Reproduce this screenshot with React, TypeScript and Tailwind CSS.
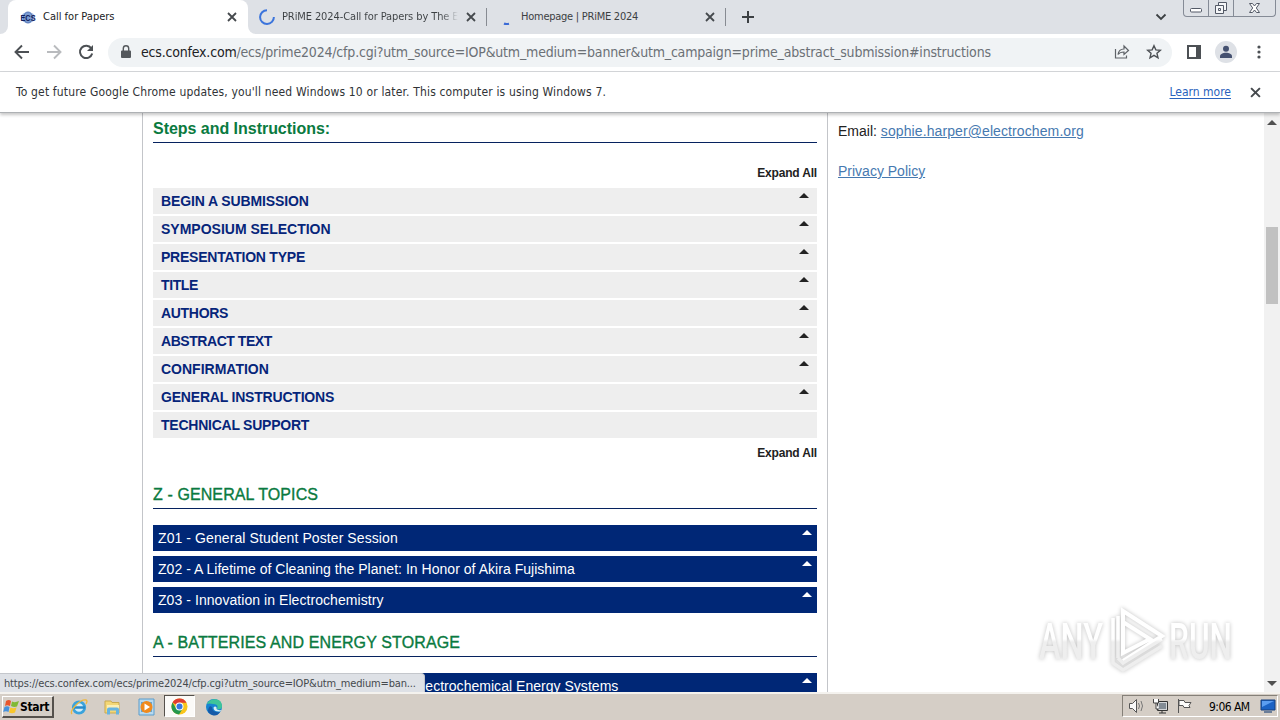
import type { ReactNode } from "react";

const ui = "font-['DejaVu_Sans_Condensed','DejaVu_Sans',sans-serif]";

function CloseIcon({ size = 10, color = "#45494d" }: { size?: number; color?: string }) {
  return (
    <svg width={size} height={size} viewBox="0 0 10 10" className="shrink-0">
      <path d="M1 1l8 8M9 1L1 9" stroke={color} strokeWidth="1.8" fill="none" />
    </svg>
  );
}

function TabStrip() {
  return (
    <div className={`flex h-[34px] shrink-0 bg-[#dee1e6] text-[11px] text-[#3c4043] ${ui}`}>
      <div className="flex w-2 bg-white">
        <div className="w-full rounded-br-lg bg-[#dee1e6]" />
      </div>
      <div className="flex w-[240px] items-center rounded-t-lg bg-white pl-3 pr-[11px]">
        <svg width="16" height="16" viewBox="0 0 16 16" className="shrink-0">
          <ellipse cx="8" cy="8.500" rx="7" ry="5.500" fill="#a9c3e8" />
          <ellipse cx="8" cy="8.500" rx="4.500" ry="5.500" fill="#7c9bd0" stroke="#5273b5" />
          <text x="0.500" y="11.700" fontSize="9" fontWeight="bold" fontFamily="Liberation Sans" textLength="15" lengthAdjust="spacingAndGlyphs" fill="#10205c">ECS</text>
        </svg>
        <span className="ml-[7px] whitespace-nowrap text-[#202124]">Call for Papers</span>
        <span className="ml-auto flex"><CloseIcon /></span>
      </div>
      <div className="flex w-[239px] bg-white">
        <div className="flex w-full items-center rounded-bl-lg bg-[#dee1e6] pl-[11px] pr-[11px]">
          <svg width="16" height="16" viewBox="0 0 16 16" className="shrink-0">
            <path d="M8 1.200A6.900 6.900 0 1 0 14.900 8" stroke="#3b74dc" strokeWidth="2" fill="none" />
          </svg>
          <span className="ml-[7px] w-[176px] overflow-hidden whitespace-nowrap bg-gradient-to-r from-[#3c4043] from-90% to-[#dee1e6] bg-clip-text tracking-[-0.1px] text-transparent">PRiME 2024-Call for Papers by The Electro</span>
          <span className="ml-auto flex"><CloseIcon /></span>
        </div>
      </div>
      <div className="my-2 -ml-px mr-px w-px bg-[#878b92]" />
      <div className="flex w-[237px] items-center pl-[11px] pr-[10px]">
        <svg width="16" height="16" viewBox="0 0 16 16" className="shrink-0">
          <path d="M5 14.500q2 1 5 0.200" stroke="#3b6bd6" strokeWidth="2" fill="none" />
        </svg>
        <span className="ml-[6px] whitespace-nowrap tracking-[-0.25px]">Homepage | PRiME 2024</span>
        <span className="ml-auto flex"><CloseIcon /></span>
      </div>
      <div className="my-2 w-px bg-[#878b92]" />
      <svg width="14" height="14" viewBox="0 0 14 14" className="ml-[15px] mt-[10px]">
        <path d="M7 1v12M1 7h12" stroke="#3c4043" strokeWidth="2" />
      </svg>
      <svg width="12" height="8" viewBox="0 0 12 8" className="ml-auto mr-[16px] mt-[13px]">
        <path d="M1.500 1.500L6 6l4.500-4.500" stroke="#3c4043" strokeWidth="1.800" fill="none" />
      </svg>
      <div className="mr-[4px] flex h-[17px] w-[93px] rounded-b border border-t-0 border-[#858b96]">
        <div className="w-[25px] border-r border-[#858b96]">
          <svg width="24" height="16"><rect x="6.500" y="8.500" width="11" height="3.500" rx="1" fill="#fff" stroke="#535966" /></svg>
        </div>
        <div className="w-[25px] border-r border-[#858b96]">
          <svg width="24" height="16"><g fill="#f5f6f8" stroke="#535966"><path d="M9.500 2.500h8v8h-8z" /><path d="M6.500 5.500h8v8h-8z" /><path d="M9.500 8.500h2v2h-2z" /></g></svg>
        </div>
        <svg width="41" height="16"><path d="M15.500 3.500h3l2 2.500 2-2.500h3l-3.200 4.500 3.200 4.500h-3l-2-2.500-2 2.500h-3L18.700 8z" fill="#fff" stroke="#535966" /></svg>
      </div>
    </div>
  );
}

function Toolbar() {
  return (
    <div className={`flex h-[38px] shrink-0 items-center border-b border-[#d5d7da] bg-white pb-px ${ui}`}>
      <svg width="16" height="16" viewBox="0 0 16 16" className="ml-[14px]"><path d="M15 8H2M8 1.500L1.500 8 8 14.500" stroke="#4c5054" strokeWidth="1.900" fill="none" /></svg>
      <svg width="16" height="16" viewBox="0 0 16 16" className="ml-[16px]"><path d="M1 8h13M8 1.500L14.500 8 8 14.500" stroke="#b9bbbe" strokeWidth="1.900" fill="none" /></svg>
      <svg width="16" height="16" viewBox="0 0 16 16" className="ml-[16px]"><path d="M13.300 4.300A6.200 6.200 0 1 0 14.200 9.500" stroke="#4c5054" strokeWidth="2" fill="none" /><path d="M15 1v6H9z" fill="#4c5054" /></svg>
      <div className="ml-[14px] flex h-[29px] w-[1064px] items-center rounded-full bg-[#f0f3f5] pl-[13px]">
        <svg width="10" height="14" viewBox="0 0 10 14"><path d="M1 5.500h8a1 1 0 0 1 1 1V12a1 1 0 0 1-1 1H1a1 1 0 0 1-1-1V6.500a1 1 0 0 1 1-1z" fill="#54585c" /><path d="M2.300 6V3.500a2.700 2.700 0 0 1 5.400 0V6" stroke="#54585c" strokeWidth="1.400" fill="none" /></svg>
        <span className="ml-[10px] mt-px whitespace-nowrap text-[14px] tracking-[-0.19px] text-[#6b7075]"><span className="text-[#202124]">ecs.confex.com</span>/ecs/prime2024/cfp.cgi?utm_source=IOP&amp;utm_medium=banner&amp;utm_campaign=prime_abstract_submission#instructions</span>
        <svg width="16" height="16" viewBox="0 0 16 16" className="ml-auto"><path d="M1.500 5v9h11V11.500M4 10.500C4.500 7 7 5 10 5V2l4.500 4.500L10 10.500V8C7.500 8 5.500 8.500 4 10.500z" stroke="#5f6368" strokeWidth="1.200" fill="none" /></svg>
        <svg width="16" height="16" viewBox="0 0 16 16" className="ml-[16px] mr-[10px]"><path d="M8 1.700l1.850 4.200 4.550.4-3.450 3 1.050 4.500L8 11.400l-4 2.400 1.050-4.500-3.450-3 4.550-.4z" stroke="#4c5054" strokeWidth="1.400" fill="none" /></svg>
      </div>
      <svg width="14" height="14" viewBox="0 0 14 14" className="ml-[15px]"><path d="M1 1h12v12H1z" stroke="#4c5054" strokeWidth="2" fill="none" /><path d="M9 0h5v14H9z" fill="#4c5054" /></svg>
      <svg width="22" height="22" viewBox="0 0 22 22" className="ml-[14px]"><circle cx="11" cy="11" r="11" fill="#dee1e6" /><circle cx="11" cy="7.800" r="3" fill="#455170" /><path d="M5 17v-1.500c0-5 12-5 12 0V17z" fill="#455170" /></svg>
      <svg width="4" height="14" viewBox="0 0 4 14" className="ml-[20px]"><g fill="#4c5054"><circle cx="2" cy="2" r="1.600" /><circle cx="2" cy="7" r="1.600" /><circle cx="2" cy="12" r="1.600" /></g></svg>
    </div>
  );
}

function Notice() {
  return (
    <div className={`relative z-10 flex h-[41px] shrink-0 items-center border-b border-[#aeb1b4] bg-white pl-4 pr-[19px] text-[12px] shadow-[0_2px_3px_rgba(0,0,0,0.22)] ${ui}`}>
      <span className="whitespace-nowrap tracking-[0.16px] text-[#303336]">To get future Google Chrome updates, you'll need Windows 10 or later. This computer is using Windows 7.</span>
      <span className="ml-auto mr-[19px] whitespace-nowrap text-[#2a62bd] underline underline-offset-2">Learn more</span>
      <CloseIcon size={11} />
    </div>
  );
}

function Caret({ color = "#222" }: { color?: string }) {
  return <svg width="10" height="5" viewBox="0 0 10 5" className="shrink-0"><path d="M0 5L5 0l5 5z" fill={color} /></svg>;
}

function Heading({ children, track }: { children: ReactNode; track: string }) {
  return <h2 className={`mb-4 h-[24px] whitespace-nowrap border-b border-[#06225f] text-[16px] leading-[20px] text-[#0a7a40] [-webkit-text-stroke:0.35px_#0a7a40] ${track}`}>{children}</h2>;
}

const steps = [
  { label: "BEGIN A SUBMISSION", track: "tracking-[-0.12px]" },
  { label: "SYMPOSIUM SELECTION", track: "tracking-[0px]" },
  { label: "PRESENTATION TYPE", track: "tracking-[-0.24px]" },
  { label: "TITLE", track: "tracking-[-0.4px]" },
  { label: "AUTHORS", track: "tracking-[-0.3px]" },
  { label: "ABSTRACT TEXT", track: "tracking-[-0.45px]" },
  { label: "CONFIRMATION", track: "tracking-[0px]" },
  { label: "GENERAL INSTRUCTIONS", track: "tracking-[-0.2px]" },
  { label: "TECHNICAL SUPPORT", track: "tracking-[-0.24px]" },
];

function Topic({ children, track }: { children: ReactNode; track: string }) {
  return (
    <div className={`mb-[5px] flex h-[26px] justify-between whitespace-nowrap bg-[#002776] pl-[5px] pr-[5px] text-[14px] leading-[26px] text-white ${track}`}>
      <span>{children}</span>
      <span className="mt-[5px] flex"><Caret color="#fff" /></span>
    </div>
  );
}

function Page() {
  return (
    <div className="flex min-h-0 flex-1 overflow-hidden bg-white font-['Liberation_Sans',Arial,sans-serif]">
      <main className="ml-[142px] w-[686px] shrink-0 border-x border-[#c3c5c9] pl-[10px] pr-[10px] pt-[6px]">
        <div className="h-[24px] border-b border-[#06225f] text-[16px] font-bold leading-[20px] tracking-[-0.03px] text-[#0a7a40]">Steps and Instructions:</div>
        <div className="mt-[22px] h-[23px] text-right text-[12px] font-bold leading-[16px] tracking-[-0.18px] text-[#222]">Expand All</div>
        {steps.map((s, i) => (
          <div key={s.label} className={`mb-[2px] flex h-[26px] justify-between bg-[#eee] pl-2 pr-2 text-[14px] font-bold leading-[26px] text-[#06257a] ${s.track}`}>
            <span>{s.label}</span>
            {i < 8 && <span className="mt-[5px] flex"><Caret /></span>}
          </div>
        ))}
        <div className="mt-[7px] h-[40px] text-right text-[12px] font-bold leading-[16px] tracking-[-0.18px] text-[#222]">Expand All</div>
        <Heading track="tracking-[0.1px]">Z - GENERAL TOPICS</Heading>
        <Topic track="tracking-[0.09px]">Z01 - General Student Poster Session</Topic>
        <Topic track="tracking-[0.03px]">Z02 - A Lifetime of Cleaning the Planet: In Honor of Akira Fujishima</Topic>
        <Topic track="tracking-[0.06px]">Z03 - Innovation in Electrochemistry</Topic>
        <div className="mt-[20px]"><Heading track="tracking-[0.12px]">A - BATTERIES AND ENERGY STORAGE</Heading></div>
        <Topic track="tracking-[0.03px]">A01 - New Approaches and Advances in Electrochemical Energy Systems</Topic>
      </main>
      <aside className="whitespace-nowrap pl-[10px] pt-[8px] text-[14px] leading-5 text-[#222]">
        <p>Email: <a className="tracking-[0.1px] text-[#4679b0] underline">sophie.harper@electrochem.org</a></p>
        <p className="mt-5"><a className="text-[#4679b0] underline">Privacy Policy</a></p>
      </aside>
      <div className="ml-auto flex w-4 flex-col items-center bg-[#f1f1f1] pb-[6px] pt-[7px]">
        <Caret color="#505050" />
        <div className="mt-[102px] h-[77px] w-3 bg-[#c1c1c1]" />
        <span className="mt-auto flex rotate-180"><Caret color="#505050" /></span>
      </div>
    </div>
  );
}

function Taskbar() {
  return (
    <div className={`flex h-[28px] shrink-0 items-start border-t-2 border-[#f4f2ee] bg-[#d5cec6] pt-px text-[12px] text-black ${ui}`}>
      <div className="ml-[2px] mt-[1px] flex h-[22px] w-[52px] items-center border border-b-2 border-r-2 border-b-[#55514c] border-l-white border-r-[#55514c] border-t-white">
        <svg width="17" height="16" viewBox="0 0 17 16" className="shrink-0"><path d="M3 2q3-2 5 0L7 7Q4 5.500 2 7z" fill="#e8562d" /><path d="M9 2.500q3 1.500 7-.5l-2 5.500q-3 1-6-.5z" fill="#80b935" /><path d="M1.500 8q2.500-1.500 5 0L5.500 13Q3 11.500.2 13z" fill="#4692dd" /><path d="M7.500 8.500q2.500 1.500 6 0L12 13.500q-3 1.500-6 0z" fill="#f8c62c" /></svg>
        <b className="text-[12px] tracking-[-0.35px]">Start</b>
      </div>
      <svg width="18" height="18" viewBox="0 0 18 18" className="ml-[16px] mt-[3px]"><circle cx="9" cy="9.500" r="5.700" fill="#d5edf8" stroke="#3aa3dc" strokeWidth="2.800" /><path d="M4 9.500h11" stroke="#278aca" strokeWidth="2.500" /><path d="M2 16C-1 13 10 1 16 2q2 .5 0 4" stroke="#efb83d" strokeWidth="1.300" fill="none" /></svg>
      <svg width="17" height="18" viewBox="0 0 17 18" className="ml-[16px] mt-[3px]"><path d="M1 3h6l1 1.500h7V15H1z" fill="#f3d776" stroke="#c9a950" /><path d="M3 7h12v5H3z" fill="#fcefb4" /><path d="M3 16.500v-5q0-2 2-2h8q2 0 2 2v5h-3v-4H6v4z" fill="#67b4e0" /></svg>
      <svg width="17" height="18" viewBox="0 0 17 18" className="ml-[17px] mt-[3px]"><path d="M1 1h15v16H1z" fill="#b7d9ef" stroke="#5b9dcc" /><path d="M3 4h11v10H3z" fill="#5fa7d8" /><circle cx="8.500" cy="9" r="6" fill="#f08a1d" /><path d="M6.500 5.500L12 9l-5.500 3.500z" fill="#fff" /></svg>
      <div className="ml-[9px] flex h-[22px] w-[31px] items-center justify-center border border-b-white border-l-[#55514c] border-r-white border-t-[#55514c] bg-[#fbfaf8]">
        <svg width="17" height="17" viewBox="0 0 18 18"><circle cx="9" cy="9" r="8.500" fill="#f9c51b" /><path d="M9 9L1.600 4.700A8.500 8.500 0 0 1 16.400 5H9z" fill="#df3d31" /><path d="M1.600 4.700A8.500 8.500 0 0 0 8.500 17.500L12.500 11 9 9 5.500 11z" fill="#25984e" /><circle cx="9" cy="9" r="4.200" fill="#fff" /><circle cx="9" cy="9" r="3.200" fill="#3877df" /></svg>
      </div>
      <svg width="18" height="18" viewBox="0 0 18 18" className="ml-[10px] mt-[3px]"><circle cx="9" cy="9" r="8" fill="#1684d2" /><path d="M2 6C4 0 17-1 17 8q0 4-5 3 2-5-4-5Q4 5 2 6z" fill="#3ec49a" /><path d="M7 9q0 6 8 5-3 5-8 3-7-3-2-9z" fill="#155aa8" /><path d="M10 8.500q2 0 1.500 2.500 1 1.500 5 1l-1.500 1.500Q9 14 8.500 10q0-1.500 1.500-1.500z" fill="#d8eef5" /></svg>
      <div className="ml-auto mr-[2px] flex h-[22px] w-[156px] items-center border border-b-white border-l-[#858078] border-r-white border-t-[#858078] pl-[5px]">
        <svg width="18" height="16" viewBox="0 0 18 16"><path d="M1.500 5.500h3l4-4v13l-4-4h-3z" fill="#f9f9f9" stroke="#555" /><path d="M10.500 5q2 3 0 6M13 3q3 5 0 10" stroke="#777" fill="none" /></svg>
        <svg width="17" height="16" viewBox="0 0 17 16" className="ml-[6px]"><path d="M5.500 3.500h10v9h-10zM7 15h7M10 13v2" fill="#d4d6d8" stroke="#333" /><path d="M7 5h7v6H7z" fill="#838c95" /><path d="M1.500 1v4h5V1M4 5v6h3" fill="#fff" stroke="#444" /></svg>
        <svg width="17" height="16" viewBox="0 0 17 16" className="ml-[7px]"><path d="M2.500 1v14M3 2.500h5l1 2h6l-2 3 1 2H8l-1-2H3z" fill="#fcfcfb" stroke="#555" /></svg>
        <span className="ml-[16px] mt-px whitespace-nowrap tracking-[-0.55px]">9:06 AM</span>
        <svg width="16" height="15" viewBox="0 0 16 15" className="ml-auto mr-px"><path d="M1 1h14v10H1z" fill="#1b62c4" stroke="#173f7d" /><path d="M2 2h12L2 8z" fill="#5b9df0" /><path d="M4 13h8" stroke="#6b7e99" strokeWidth="2" /></svg>
      </div>
    </div>
  );
}

function Watermark() {
  return (
    <div className="pointer-events-none absolute left-[1036px] top-[604px] z-20 drop-shadow-[0_0_2px_#c0c0c0]">
      <svg width="202" height="72" viewBox="0 0 202 72">
        <defs>
          <linearGradient id="fade" gradientUnits="userSpaceOnUse" x1="0" y1="35" x2="0" y2="38">
            <stop offset="0" stopColor="#fff" />
            <stop offset="1" stopColor="#eee" />
          </linearGradient>
        </defs>
        <g fill="url(#fade)" fontFamily="Roboto" fontSize="50" fontWeight="500">
          <text x="3" y="55" textLength="64" lengthAdjust="spacingAndGlyphs">ANY</text>
          <text x="133" y="55" textLength="63" lengthAdjust="spacingAndGlyphs">RUN</text>
        </g>
        <path d="M87 18v31l27-14-27-17M87 18V7l39 25-39 25" fill="none" stroke="#fff" strokeWidth="4" />
        <path d="M77 14v46M82 12v42M77 59l10 7 39-24M82 54l5 5 39-24" fill="none" stroke="url(#fade)" strokeWidth="3.500" />
      </svg>
    </div>
  );
}

export default function App() {
  return (
    <div className="relative flex h-[720px] w-[1280px] flex-col overflow-hidden bg-white">
      <TabStrip />
      <Toolbar />
      <Notice />
      <Page />
      <Taskbar />
      <div className={`absolute bottom-[28px] left-0 z-10 h-[19px] w-[425px] whitespace-nowrap rounded-tr border-r border-t border-[#c4c7cc] bg-[#dee1e6] pl-1 text-[11px] leading-[20px] tracking-[-0.15px] text-[#45494d] ${ui}`}>https://ecs.confex.com/ecs/prime2024/cfp.cgi?utm_source=IOP&amp;utm_medium=ban...</div>
      <Watermark />
    </div>
  );
}
